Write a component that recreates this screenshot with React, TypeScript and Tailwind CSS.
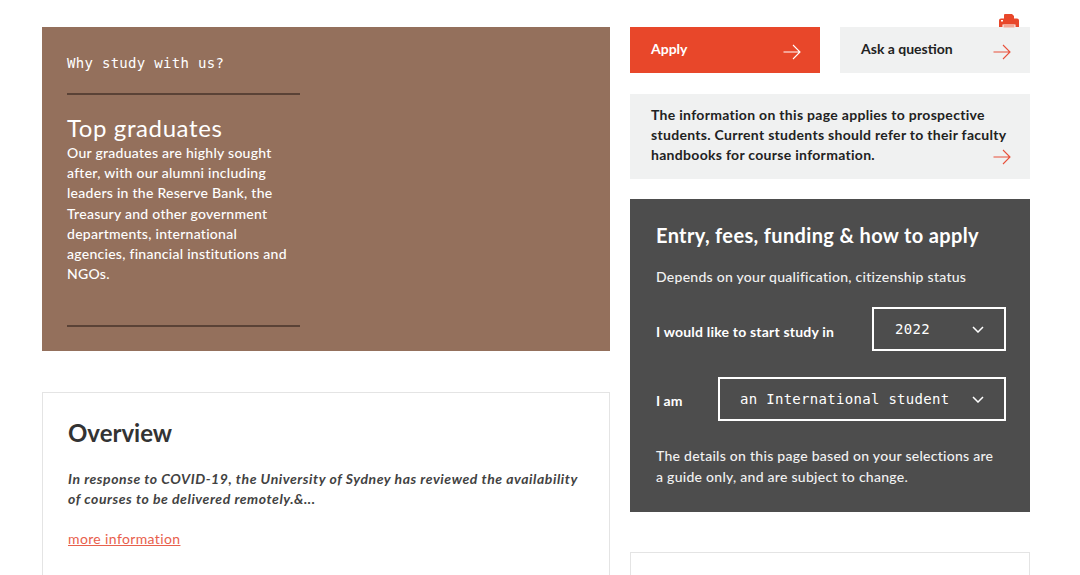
import React from "react";

const sans = "font-['Lato','Noto_Sans',sans-serif]";
const mono = "font-['DejaVu_Sans_Mono',monospace]";

function Arrow({ className }: { className: string }) {
  return (
    <svg width="18" height="16" viewBox="0 0 18 16" fill="none" stroke="currentColor" strokeWidth="1.1" className={className}>
      <path d="M0.5 8H17M10 1l7 7-7 7" />
    </svg>
  );
}

function Chevron() {
  return (
    <svg width="12" height="7" viewBox="0 0 12 7" fill="none" stroke="white" strokeWidth="1.5">
      <path d="M1 1l5 5 5-5" />
    </svg>
  );
}

function PrintIcon() {
  return (
    <svg width="20" height="14" viewBox="0 0 20 14" className="absolute right-[11px] top-[-13px]">
      <path fill="#e8472a" d="M5 1a1 1 0 0 1 1-1h7l2 2v3H5z" />
      <path fill="#e8472a" d="M2 4.500h16a2 2 0 0 1 2 2V13h-3.500v-2.500h-13V13H0V6.500a2 2 0 0 1 2-2z" />
      <rect fill="#f4a795" x="4.500" y="10.500" width="11" height="3" />
      <rect fill="#ffffff" x="2" y="6" width="2" height="1.500" />
    </svg>
  );
}

export default function App() {
  return (
    <div className={`${sans} w-[1080px] h-[575px] overflow-hidden bg-white flex gap-5 pl-[42px] pt-[27px]`}>
      <div className="w-[568px] flex flex-col gap-[41px] shrink-0">
        <section className="h-[324px] shrink-0 bg-[#94705c] pl-[25px] pt-[27px] text-white">
          <p className={`${mono} text-[14px] leading-[18px] tracking-[0.3px]`}>Why study with us?</p>
          <div className="w-[233px] h-[2px] bg-[#5a4236] mt-[21px]" />
          <h2 className="text-[24px] leading-[30px] mt-[18px] tracking-[0.6px]">Top graduates</h2>
          <p className="w-[225px] text-[14px] leading-[20.2px] font-medium tracking-[0.27px]">
            Our graduates are highly sought after, with our alumni including leaders in the Reserve Bank, the Treasury and other government departments, international agencies, financial institutions and NGOs.
          </p>
          <div className="w-[233px] h-[2px] bg-[#5a4236] mt-[41px]" />
        </section>
        <section className="h-[300px] shrink-0 border border-[#e4e4e4] pl-[25px] pt-[25px] text-[#333333]">
          <h2 className="text-[24px] leading-[30px] font-bold">Overview</h2>
          <p className="w-[520px] mt-[21px] text-[14px] leading-[20px] font-bold italic tracking-[0.55px] text-[#424242]">
            In response to COVID-19, the University of Sydney has reviewed the availability of courses to be delivered remotely.&amp;...
          </p>
          <a className="block mt-[20px] text-[14px] leading-[20px] tracking-[0.37px] text-[#e8604c] underline">more information</a>
        </section>
      </div>
      <div className="w-[400px] flex flex-col shrink-0">
        <div className="flex gap-5 shrink-0">
          <div className="relative w-[190px] h-[46px] bg-[#e8472a] text-white font-bold text-[14px] pl-[21px] pt-[13px] leading-[18px]">
            Apply
            <Arrow className="absolute right-[19px] top-[17px] text-white" />
          </div>
          <div className="relative w-[190px] h-[46px] bg-[#f0f1f1] text-[#222222] font-bold text-[14px] pl-[21px] pt-[13px] leading-[18px]">
            Ask a question
            <Arrow className="absolute right-[19px] top-[17px] text-[#e8503a]" />
            <PrintIcon />
          </div>
        </div>
        <div className="relative h-[85px] mt-[21px] shrink-0 bg-[#f0f1f1] pl-[21px] pt-[11px] text-[14px] leading-[20.2px] font-bold tracking-[0.3px] text-[#222222]">
          <p className="w-[370px]">The information on this page applies to prospective students. Current students should refer to their faculty handbooks for course information.</p>
          <Arrow className="absolute right-[19px] top-[55px] text-[#e8503a]" />
        </div>
        <section className="h-[313px] mt-5 shrink-0 bg-[#4d4d4d] pl-[26px] pr-[24px] pt-[23px] text-white">
          <h2 className="text-[20px] leading-[26px] font-bold tracking-[0.35px]">Entry, fees, funding &amp; how to apply</h2>
          <p className="mt-[19px] text-[14px] leading-[20px] font-medium tracking-[0.27px] text-[#f2f2f2]">Depends on your qualification, citizenship status</p>
          <div className="mt-[20px] flex items-center justify-between h-[44px]">
            <span className="text-[14px] font-bold tracking-[0.2px] mt-[4px]">I would like to start study in</span>
            <div className={`${mono} w-[134px] h-[44px] border-2 border-white flex items-center justify-between pl-[21px] pr-[20px] text-[14px] tracking-[0.3px]`}>
              2022
              <Chevron />
            </div>
          </div>
          <div className="mt-[26px] flex items-center justify-between h-[44px]">
            <span className="text-[14px] font-bold mt-[2px]">I am</span>
            <div className={`${mono} w-[288px] h-[44px] border-2 border-white flex items-center justify-between pl-[20px] pr-[20px] text-[14px] tracking-[0.3px]`}>
              an International student
              <Chevron />
            </div>
          </div>
          <p className="w-[345px] mt-[24px] text-[14px] leading-[21px] font-medium tracking-[0.27px] text-[#f2f2f2]">
            The details on this page based on your selections are a guide only, and are subject to change.
          </p>
        </section>
        <section className="h-[100px] mt-10 shrink-0 border border-[#e4e4e4]" />
      </div>
    </div>
  );
}
